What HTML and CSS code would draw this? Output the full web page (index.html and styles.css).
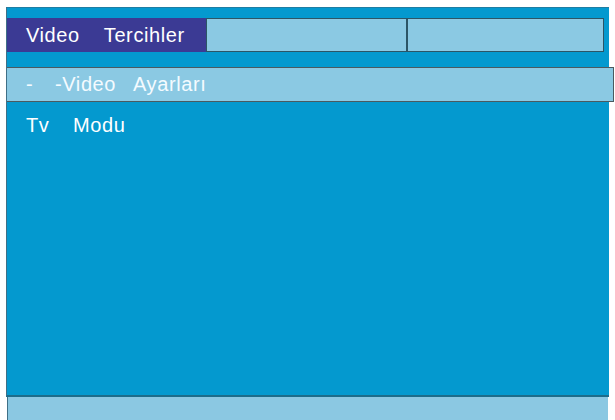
FILE: index.html
```html
<!DOCTYPE html>
<html lang="tr">
<head>
<meta charset="utf-8">
<title>Video Tercihler</title>
<link rel="stylesheet" href="styles.css">
</head>
<body>
<div class="screen">
  <div class="panel">
    <div class="tabs">
      <div class="tab tab-active"><span>Video</span><span>Tercihler</span></div>
      <div class="tab tab-blank tab-mid"></div>
      <div class="tab tab-blank tab-last"></div>
    </div>
    <div class="row row-selected">
      <span class="dash">-</span><span class="w1">-Video</span><span>Ayarları</span>
    </div>
    <div class="row row-plain">
      <span class="w2">Tv</span><span>Modu</span>
    </div>
  </div>
  <div class="footer"></div>
</div>
</body>
</html>
```
FILE: styles.css
```css
html, body {
  margin: 0;
  padding: 0;
  background: #ffffff;
}
body {
  font-family: "Liberation Sans", Arial, sans-serif;
  color: #ffffff;
}
.screen {
  width: 603px;
  margin: 7px 0 0 6px;
  display: flex;
  flex-direction: column;
}
.panel {
  background: #0499cf;
  border-left: 1px solid #3f6f86;
  border-top: 1px solid #1f7ea3;
  border-bottom: 2px solid #1d6c8a;
  padding-top: 10px;
  display: flex;
  flex-direction: column;
  box-sizing: border-box;
  height: 390px;
}
.tabs {
  display: flex;
  width: 597px;
  height: 34px;
}
.tab {
  height: 34px;
  box-sizing: border-box;
}
.tab-active {
  width: 199px;
  background: #3b3a94;
  display: flex;
  align-items: center;
  padding-left: 19px;
  font-size: 20px;
  letter-spacing: 0.6px;
  line-height: 34px;
  gap: 24px;
}
.tab-blank {
  background: #8bc9e3;
  border: 1px solid #2c5566;
}
.tab-mid {
  width: 202px;
  border-right: 2px solid #2c5566;
}
.tab-last {
  width: 196px;
  border-left: none;
}
.row {
  font-size: 20px;
  letter-spacing: 0.6px;
  display: flex;
  align-items: center;
  padding-left: 19px;
}
.row-selected {
  margin-top: 15px;
  width: 607px;
  height: 35px;
  box-sizing: border-box;
  background: #8bc9e3;
  border: 1px solid #4b5a60;
  border-left: none;
  color: #f4fbff;
}
.dash {
  width: 29px;
}
.w1 {
  width: 78px;
}
.row-plain {
  margin-top: 6px;
  height: 34px;
}
.w2 {
  width: 47px;
}
.footer {
  height: 23px;
  background: #8bc8e2;
  border-left: 1px solid #3f6f86;
  margin-left: 1px;
  width: 600px;
}
```
